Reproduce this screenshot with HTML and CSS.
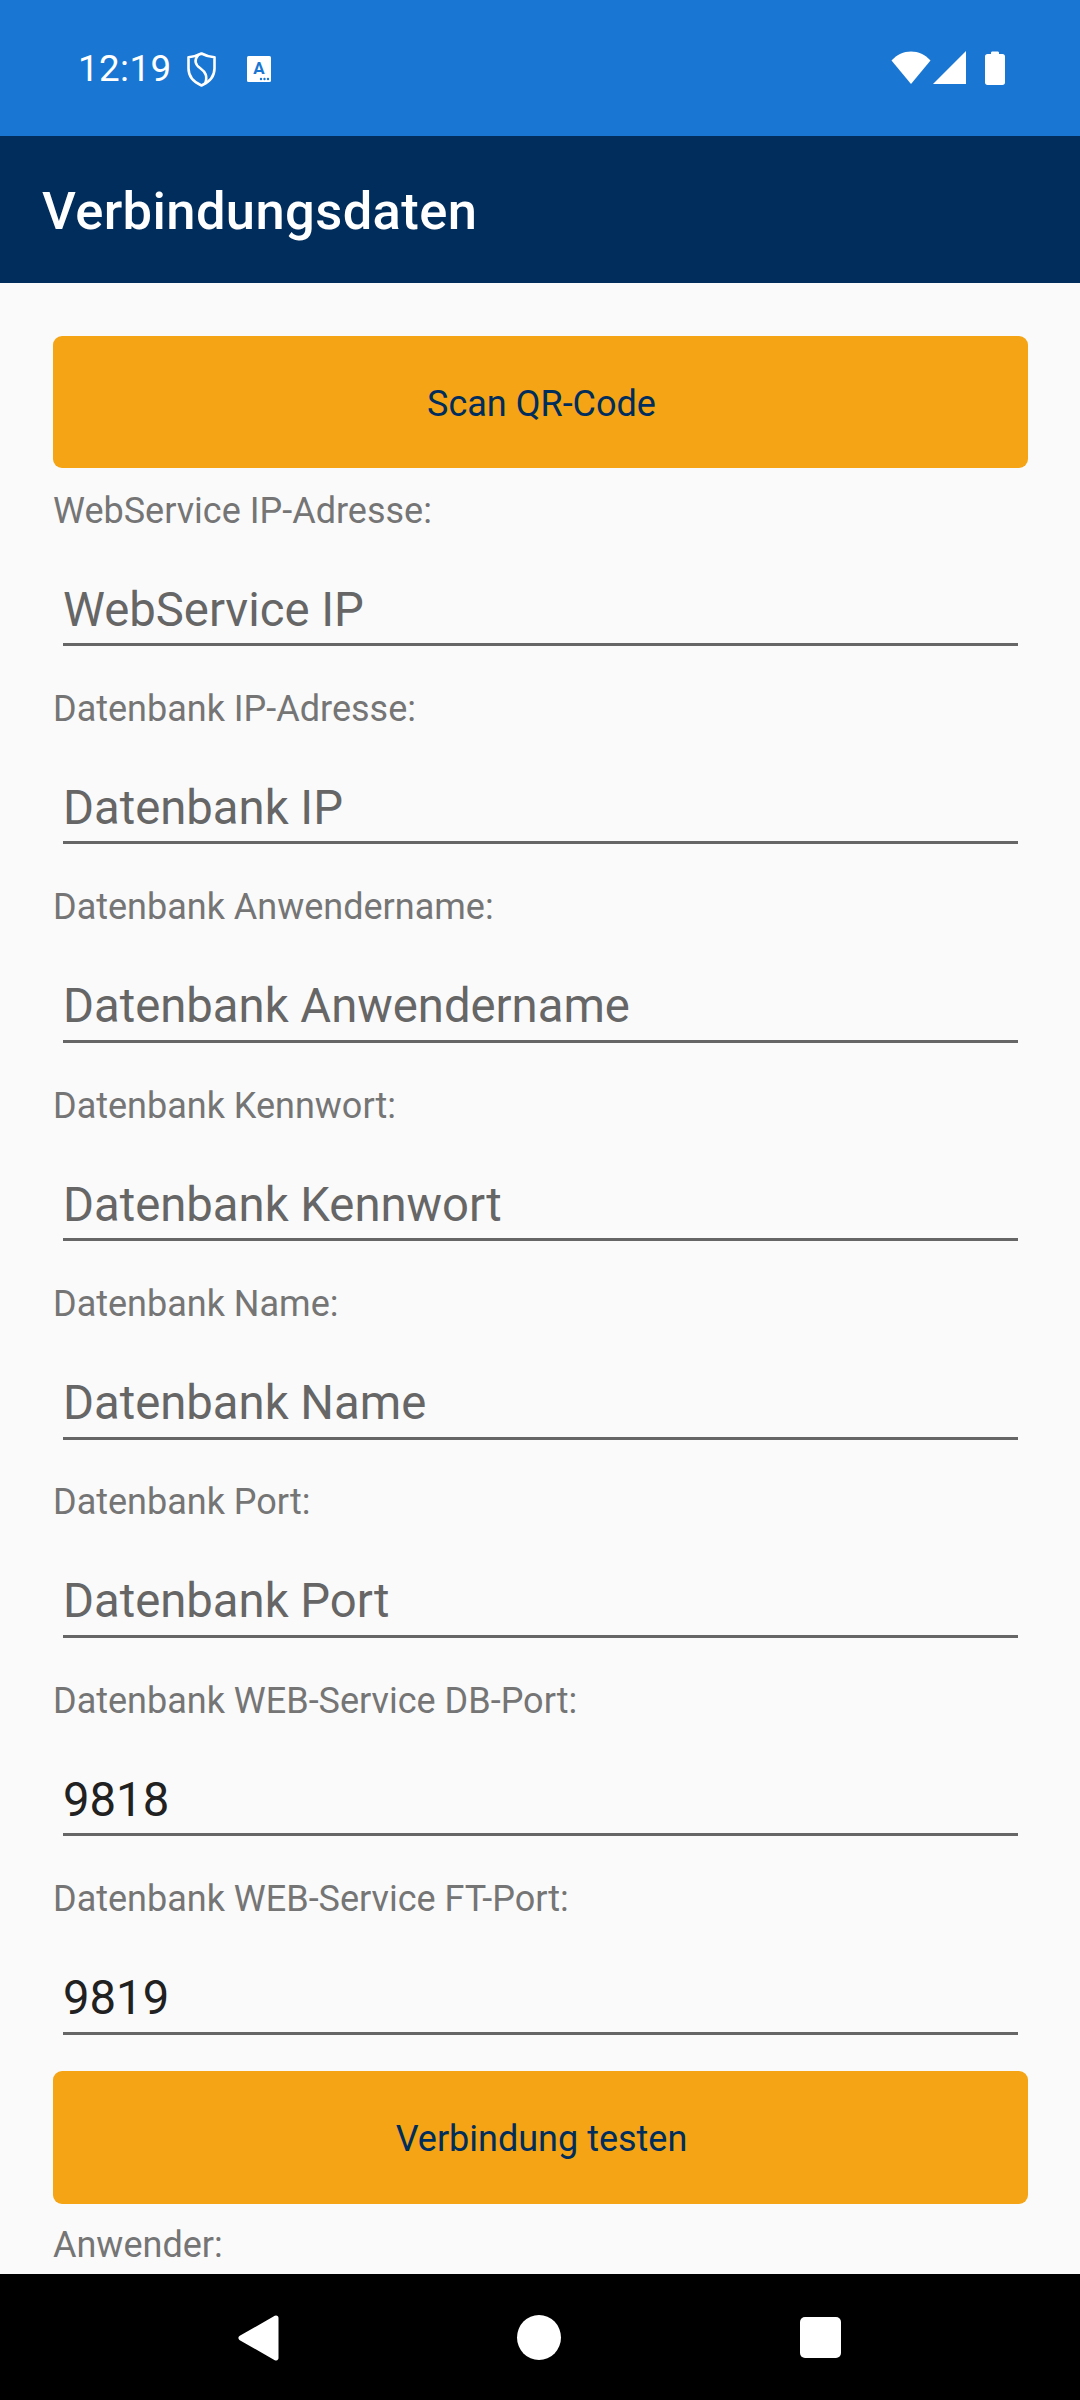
FILE: index.html
```html
<!DOCTYPE html>
<html lang="de">
<head>
<meta charset="utf-8">
<title>Verbindungsdaten</title>
<link rel="stylesheet" href="styles.css">
</head>
<body>
<div class="screen">
  <header class="statusbar">
    <div class="status-left">
      <span class="time">12:19</span>
      <svg class="icon-shield" viewBox="0 0 29 35" aria-hidden="true">
        <path d="M14.500 1.500C18.500 3.700 22.500 4.900 27.500 5.200V16.500C27.500 24.500 22.500 30 14.500 33.500C6.500 30 1.500 24.500 1.500 16.500V5.200C6.500 4.900 10.500 3.700 14.500 1.500Z" fill="none" stroke="#fff" stroke-width="2.600" stroke-linejoin="round"/>
        <path d="M11 3.500C7 8 8 12.500 13 16C18.500 20 21 24 18 32" fill="none" stroke="#fff" stroke-width="2.600"/>
      </svg>
      <svg class="icon-a" viewBox="0 0 24 26" aria-hidden="true">
        <rect width="24" height="26" rx="1.500" fill="#fff"/>
        <text x="12" y="17.500" class="icon-a-letter">A</text>
        <circle cx="14" cy="23" r="1.200" fill="#1976d2"/>
        <circle cx="17.500" cy="23" r="1.200" fill="#1976d2"/>
        <circle cx="21" cy="23" r="1.200" fill="#1976d2"/>
      </svg>
    </div>
    <div class="status-right">
      <svg class="icon-wifi" viewBox="0 0 40 33" aria-hidden="true">
        <path d="M0.500 9.500C6 3.500 12.500 0.500 20 0.500S34 3.500 39.500 9.500L20 33Z" fill="#fff"/>
      </svg>
      <svg class="icon-signal" viewBox="0 0 33 33" aria-hidden="true">
        <path d="M33 0V33H0Z" fill="#fff"/>
      </svg>
      <svg class="icon-battery" viewBox="0 0 20 34" aria-hidden="true">
        <path d="M6 2C6 1 6.500 0.500 7.500 0.500H12.500C13.500 0.500 14 1 14 2V3H17.500C19 3 20 4 20 5.500V31.500C20 33 19 34 17.500 34H2.500C1 34 0 33 0 31.500V5.500C0 4 1 3 2.500 3H6Z" fill="#fff"/>
      </svg>
    </div>
  </header>
  <div class="toolbar"><h1 class="title">Verbindungsdaten</h1></div>
  <main class="content">
    <div class="button">Scan QR-Code</div>
    <div class="field"><div class="label">WebService IP-Adresse:</div><div class="input hint">WebService IP</div></div>
    <div class="field"><div class="label">Datenbank IP-Adresse:</div><div class="input hint">Datenbank IP</div></div>
    <div class="field"><div class="label">Datenbank Anwendername:</div><div class="input hint">Datenbank Anwendername</div></div>
    <div class="field"><div class="label">Datenbank Kennwort:</div><div class="input hint">Datenbank Kennwort</div></div>
    <div class="field"><div class="label">Datenbank Name:</div><div class="input hint">Datenbank Name</div></div>
    <div class="field"><div class="label">Datenbank Port:</div><div class="input hint">Datenbank Port</div></div>
    <div class="field"><div class="label">Datenbank WEB-Service DB-Port:</div><div class="input">9818</div></div>
    <div class="field"><div class="label">Datenbank WEB-Service FT-Port:</div><div class="input">9819</div></div>
    <div class="button button-second">Verbindung testen</div>
    <div class="label label-last">Anwender:</div>
  </main>
  <nav class="navbar">
    <svg class="nav-back" viewBox="0 0 41 46" aria-hidden="true">
      <path d="M38 3L3 23L38 43Z" fill="#fff" stroke="#fff" stroke-width="5" stroke-linejoin="round"/>
    </svg>
    <span class="nav-home"></span>
    <span class="nav-recent"></span>
  </nav>
</div>
</body>
</html>
```

FILE: styles.css
```css
* { box-sizing: border-box; }
html, body { margin: 0; padding: 0; }
body { font-family: Roboto, "Liberation Sans", sans-serif; background: #fafafa; }
.screen { width: 1080px; height: 2400px; display: flex; flex-direction: column; overflow: hidden; }

.statusbar { height: 136px; flex: none; background: #1976d2; color: #fff; display: flex; justify-content: space-between; padding: 51px 75px 0 78px; }
.status-left { display: flex; align-items: flex-start; }
.time { font-size: 36.75px; line-height: 36px; width: 95px; letter-spacing: 0.4px; }
.icon-shield { width: 29px; height: 35px; margin-left: 14px; margin-top: 1px; }
.icon-a { width: 24px; height: 26px; margin-left: 31px; margin-top: 5px; }
.icon-a-letter { font-family: Roboto, sans-serif; font-weight: 700; font-size: 17px; fill: #1976d2; text-anchor: middle; }
.status-right { display: flex; align-items: flex-start; }
.icon-wifi { width: 40px; height: 33px; }
.icon-signal { width: 33px; height: 33px; margin-left: 2px; }
.icon-battery { width: 20px; height: 34px; margin-left: 19px; }

.toolbar { height: 147px; flex: none; background: #002d5c; display: flex; align-items: center; padding: 2px 0 0 42px; }
.title { margin: 0; font-size: 52.5px; font-weight: 500; letter-spacing: 0.39px; color: #fff; }

.content { flex: 1; min-height: 0; overflow: hidden; padding: 53px 52px 0 53px; }
.button { height: 132px; padding: 3px 0 0 2px; background: #f4a414; border-radius: 9px; color: #002d5c; font-size: 36px; display: flex; align-items: center; justify-content: center; }
.button-second { height: 133px; margin-top: 15.8px; }
.label { font-size: 36px; line-height: 43px; padding-top: 21.5px; height: 64.5px; color: #757575; }
.label-last { padding-top: 20px; }
.field { height: 198.4px; }
.input { margin: 47px 10px 0; height: 66.5px; border-bottom: 3px solid #666; font-size: 47.25px; line-height: 60px; color: #212121; }
.hint { color: #666; }

.navbar { height: 126px; flex: none; background: #000; position: relative; display: flex; align-items: center; }
.nav-back { position: absolute; left: 238px; top: 41px; width: 41px; height: 46px; }
.nav-home { position: absolute; left: 517px; top: 41px; width: 44px; height: 45px; border-radius: 50%; background: #fff; }
.nav-recent { position: absolute; left: 800px; top: 43px; width: 41px; height: 41px; border-radius: 5px; background: #fff; }
```
